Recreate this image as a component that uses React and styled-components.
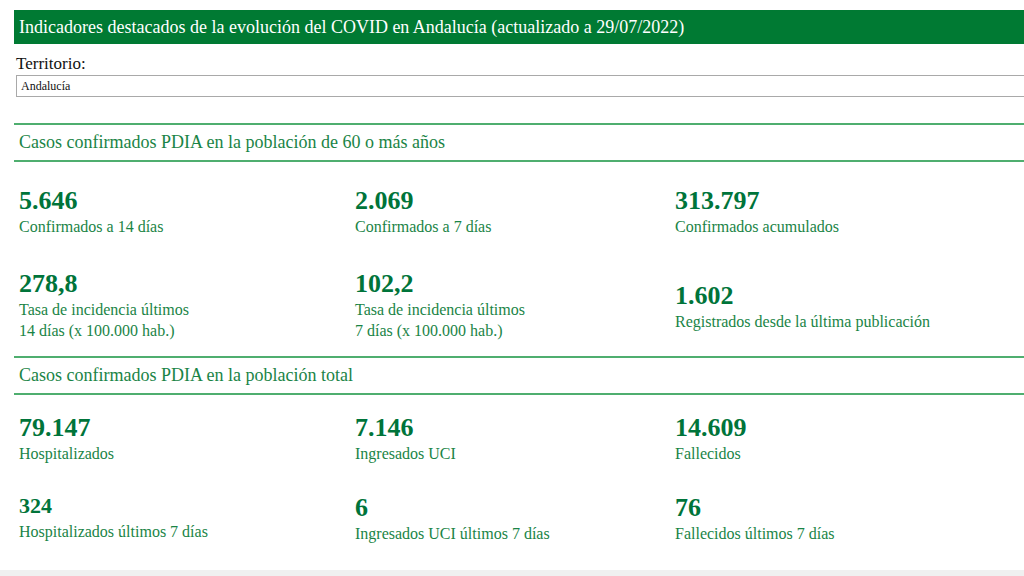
import styled, { createGlobalStyle } from 'styled-components';

const Global = createGlobalStyle`
  html, body { margin: 0; background: #fff; overflow: hidden; }
  body { font-family: "Liberation Serif", "Times New Roman", serif; width: 1024px; height: 576px; }
`;

const Page = styled.div`
  padding: 10px 0 0 14px;
  height: 566px;
  display: flex;
  flex-direction: column;
`;

const Header = styled.div`
  background: #007a33;
  color: #fff;
  font-size: 18px;
  height: 34px;
  display: flex;
  align-items: center;
  padding-left: 5px;
`;

const Label = styled.div`
  font-size: 17px;
  color: #111;
  margin-top: 10px;
  padding-left: 2px;
`;

const Select = styled.div`
  margin: 1px 0 0 2px;
  height: 20px;
  border: 1px solid #a9a9a9;
  border-right: none;
  font-size: 12px;
  display: flex;
  align-items: center;
  padding-left: 4px;
  color: #111;
`;

const SectionTitle = styled.div`
  border-top: 2px solid #4fae6f;
  border-bottom: 2px solid #4fae6f;
  color: #1a8446;
  font-size: 18px;
  height: 35px;
  display: flex;
  align-items: center;
  padding-left: 5px;
  margin-top: ${p => p.$top}px;
`;

const Grid = styled.div`
  display: grid;
  grid-template-columns: 336px 320px 1fr;
  padding-left: 5px;
  margin-top: ${p => p.$top}px;
`;

const Stat = styled.div`
  display: flex;
  flex-direction: column;
  padding-top: ${p => p.$pt || 0}px;
`;

const Value = styled.div`
  color: #00743a;
  font-weight: bold;
  font-size: ${p => p.$size || 26}px;
  line-height: 30px;
`;

const Desc = styled.div`
  color: #1a8446;
  font-size: 16px;
  line-height: 21px;
`;

const Bottom = styled.div`
  margin: auto 0 0 -14px;
  height: 6px;
  background: #f0f0f0;
`;

const S = ({ v, d, size, pt }) => (
  <Stat $pt={pt}>
    <Value $size={size}>{v}</Value>
    <Desc>{d.split('\n').map((l, i) => <div key={i}>{l}</div>)}</Desc>
  </Stat>
);

export default function App() {
  return (
    <>
      <Global />
      <Page>
        <Header>Indicadores destacados de la evolución del COVID en Andalucía (actualizado a 29/07/2022)</Header>
        <Label>Territorio:</Label>
        <Select>Andalucía</Select>
        <SectionTitle $top={26}>Casos confirmados PDIA en la población de 60 o más años</SectionTitle>
        <Grid $top={24}>
          <S v="5.646" d="Confirmados a 14 días" />
          <S v="2.069" d="Confirmados a 7 días" />
          <S v="313.797" d="Confirmados acumulados" />
        </Grid>
        <Grid $top={32}>
          <S v="278,8" d={'Tasa de incidencia últimos\n14 días (x 100.000 hab.)'} />
          <S v="102,2" d={'Tasa de incidencia últimos\n7 días (x 100.000 hab.)'} />
          <S v="1.602" d="Registrados desde la última publicación" pt={12} />
        </Grid>
        <SectionTitle $top={15}>Casos confirmados PDIA en la población total</SectionTitle>
        <Grid $top={18}>
          <S v="79.147" d="Hospitalizados" />
          <S v="7.146" d="Ingresados UCI" />
          <S v="14.609" d="Fallecidos" />
        </Grid>
        <Grid $top={27}>
          <S v="324" d="Hospitalizados últimos 7 días" size={22} />
          <S v="6" d="Ingresados UCI últimos 7 días" pt={2} />
          <S v="76" d="Fallecidos últimos 7 días" pt={2} />
        </Grid>
        <Bottom />
      </Page>
    </>
  );
}
